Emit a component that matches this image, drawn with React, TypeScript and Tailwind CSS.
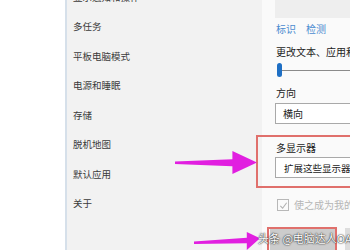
const NAV = ["显示通知和操作", "多任务", "平板电脑模式", "电源和睡眠", "存储", "脱机地图", "默认应用", "关于"];

const font = { fontFamily: "'Noto Sans CJK SC', sans-serif" };

function Arrow({ className, points }: { className: string; points: string }) {
  return (
    <svg className={className} viewBox="0 0 100 100" preserveAspectRatio="none">
      <polygon points={points} fill="#e11fe0" />
    </svg>
  );
}

export default function App() {
  return (
    <div className="relative flex h-[250px] w-[350px] overflow-hidden bg-white text-[10px] leading-[14px]" style={font}>
      <div className="w-[65px] shrink-0 bg-white" />
      <div className="w-[2px] shrink-0 bg-[#d6e0ea]" />
      <nav className="w-[195px] shrink-0 bg-[#f2f2f2] pl-[6px]">
        <ul className="-mt-[18px] flex flex-col text-[9.5px] text-[#3a3a3a]">
          {NAV.map((n) => (
            <li key={n} className="flex h-[29.5px] items-center">
              {n}
            </li>
          ))}
        </ul>
      </nav>
      <main className="flex flex-1 flex-col bg-[#fafafa] pl-[13px]">
        <div className="h-[18px] shrink-0 bg-[#eeeeee]" />
        <div className="mt-[4px] flex h-[14px] shrink-0 items-center gap-[10px] pl-[1px] text-[#4a8bd0]">
          <span>标识</span>
          <span>检测</span>
        </div>
        <div className="mt-[9px] flex h-[14px] shrink-0 items-center whitespace-nowrap pl-[1px] text-[#222]">
          更改文本、应用和其他项目的大小
        </div>
        <div className="mt-[4px] flex h-[14px] shrink-0 items-center pl-[2px]">
          <div className="h-[14px] w-[5px] rounded-full bg-[#1e6fc4]" />
          <div className="h-[1px] flex-1 bg-[#8a8a8a]" />
        </div>
        <div className="mt-[9px] flex h-[14px] shrink-0 items-center pl-[1px] text-[#222]">方向</div>
        <div className="mt-[3px] flex h-[21px] shrink-0 items-center border border-[#a9a9a9] bg-white pl-[7px] text-[#222]">
          横向
        </div>
        <div className="mt-[17px] flex h-[14px] shrink-0 items-center pl-[1px] text-[#222]">多显示器</div>
        <div className="mt-[2px] flex h-[21px] shrink-0 items-center whitespace-nowrap border border-[#a9a9a9] bg-white pl-[8px] text-[9.5px] text-[#222]">
          扩展这些显示器
        </div>
        <div className="mt-[20px] flex h-[14px] shrink-0 items-center gap-[5px] whitespace-nowrap pl-[2px] text-[#b5b5b5]">
          <div className="flex h-[12px] w-[12px] items-center justify-center border border-[#b8b8b8]">
            <svg width="9" height="9" viewBox="0 0 10 10">
              <path d="M1.5 5.5 L4 8 L8.5 2" stroke="#b0b0b0" strokeWidth="1.2" fill="none" />
            </svg>
          </div>
          <span>使之成为我的主显示器</span>
        </div>
        <div className="mt-[16px] flex h-[22px] shrink-0 gap-[10px]">
          <div className="ml-[-5px] w-[65px] bg-[#cccccc]" />
          <div className="w-[20px] bg-[#dddddd]" />
        </div>
      </main>

      <div className="absolute left-[256px] top-[135px] h-[53px] w-[110px] border-2 border-[#e0706c]" />
      <div className="absolute left-[267px] top-[227px] h-[26px] w-[70px] border-2 border-[#e0706c]" />

      <Arrow className="absolute left-[175px] top-[151px] h-[23px] w-[82px]" points="0,46 70,36 70,0 100,50 70,100 70,66 0,56" />
      <Arrow className="absolute left-[194px] top-[231px] h-[19px] w-[66px]" points="0,55 80,36 80,5 100,38 80,100 80,64 0,68" />

      <div
        className="absolute left-[258px] top-[231px] whitespace-nowrap text-[11px] text-white"
        style={{ textShadow: "0 0 2px #333, 0 0 1px #000" }}
      >
        头条 @电脑达人OAT
      </div>
    </div>
  );
}
